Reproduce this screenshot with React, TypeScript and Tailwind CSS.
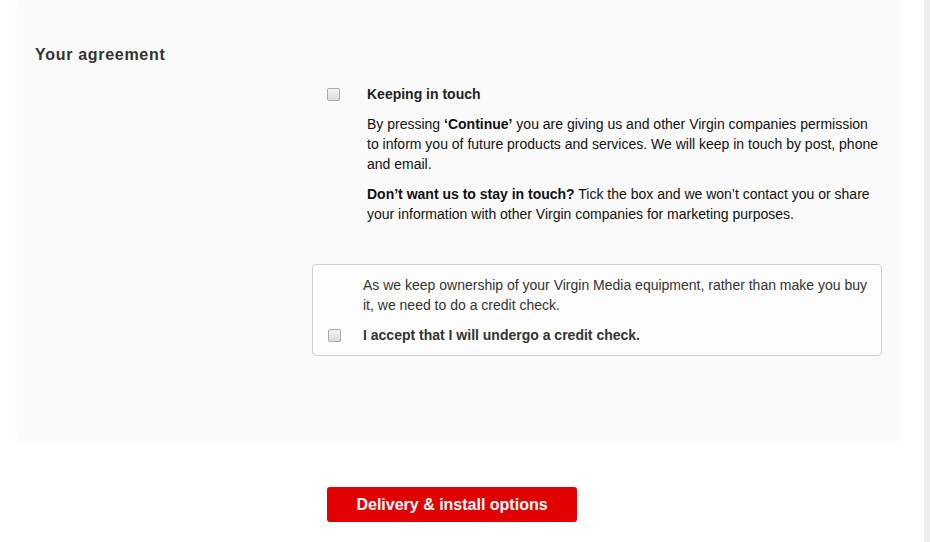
import React from "react";

function Box() {
  return (
    <input
      type="checkbox"
      className="block appearance-none w-[13px] h-[13px] m-0 border border-[#a9a9a9] rounded-[2px] bg-linear-to-b from-[#f2f2f2] to-[#dcdcdc]"
    />
  );
}

export default function App() {
  return (
    <div
      className="flex w-[930px] h-[542px] overflow-hidden bg-white"
      style={{ fontFamily: '"Liberation Sans", Arial, sans-serif' }}
    >
      <div className="w-[924px] flex flex-col">
        <div className="ml-[18px] w-[880px] h-[440px] bg-[#fafafa] shadow-[0_0_6px_rgba(0,0,0,0.04)] pt-[45px] pl-[17px]">
          <h2 className="text-[16px] leading-[20px] font-bold tracking-[0.7px] text-[#333]">
            Your agreement
          </h2>
          <div className="ml-[277px] mt-[19px]">
            <div className="flex">
              <div className="w-[55px] pl-[15px] h-[20px] flex items-center shrink-0">
                <Box />
              </div>
              <div className="w-[513px] text-[14px] leading-[20px] text-[#111]">
                <div className="font-bold text-[#222]">Keeping in touch</div>
                <p className="mt-[10px]">
                  By pressing <b>‘Continue’</b> you are giving us and other Virgin companies
                  permission to inform you of future products and services. We will keep in touch
                  by post, phone and email.
                </p>
                <p className="mt-[10px]">
                  <b>Don’t want us to stay in touch?</b> Tick the box and we won’t contact you or
                  share your information with other Virgin companies for marketing purposes.
                </p>
              </div>
            </div>
            <div className="mt-[40px] w-[570px] border border-[#cfcfcf] rounded-[4px] bg-[#fdfdfd] pt-[10px] pb-[10px] pr-[8px] text-[14px] leading-[20px] text-[#333]">
              <div className="flex">
                <div className="w-[50px] shrink-0" />
                <p className="flex-1">
                  As we keep ownership of your Virgin Media equipment, rather than make you buy it,
                  we need to do a credit check.
                </p>
              </div>
              <div className="flex mt-[10px]">
                <div className="w-[50px] pl-[15px] h-[20px] flex items-center shrink-0">
                  <Box />
                </div>
                <p className="flex-1 font-bold">I accept that I will undergo a credit check.</p>
              </div>
            </div>
          </div>
        </div>
        <div className="mt-[47px] ml-[327px]">
          <button className="w-[250px] h-[35px] bg-[#e30000] rounded-[3px] text-white font-bold text-[16px] leading-[20px]">
            Delivery &amp; install options
          </button>
        </div>
      </div>
      <div className="w-[6px] h-full bg-[#eeeeee]" />
    </div>
  );
}
